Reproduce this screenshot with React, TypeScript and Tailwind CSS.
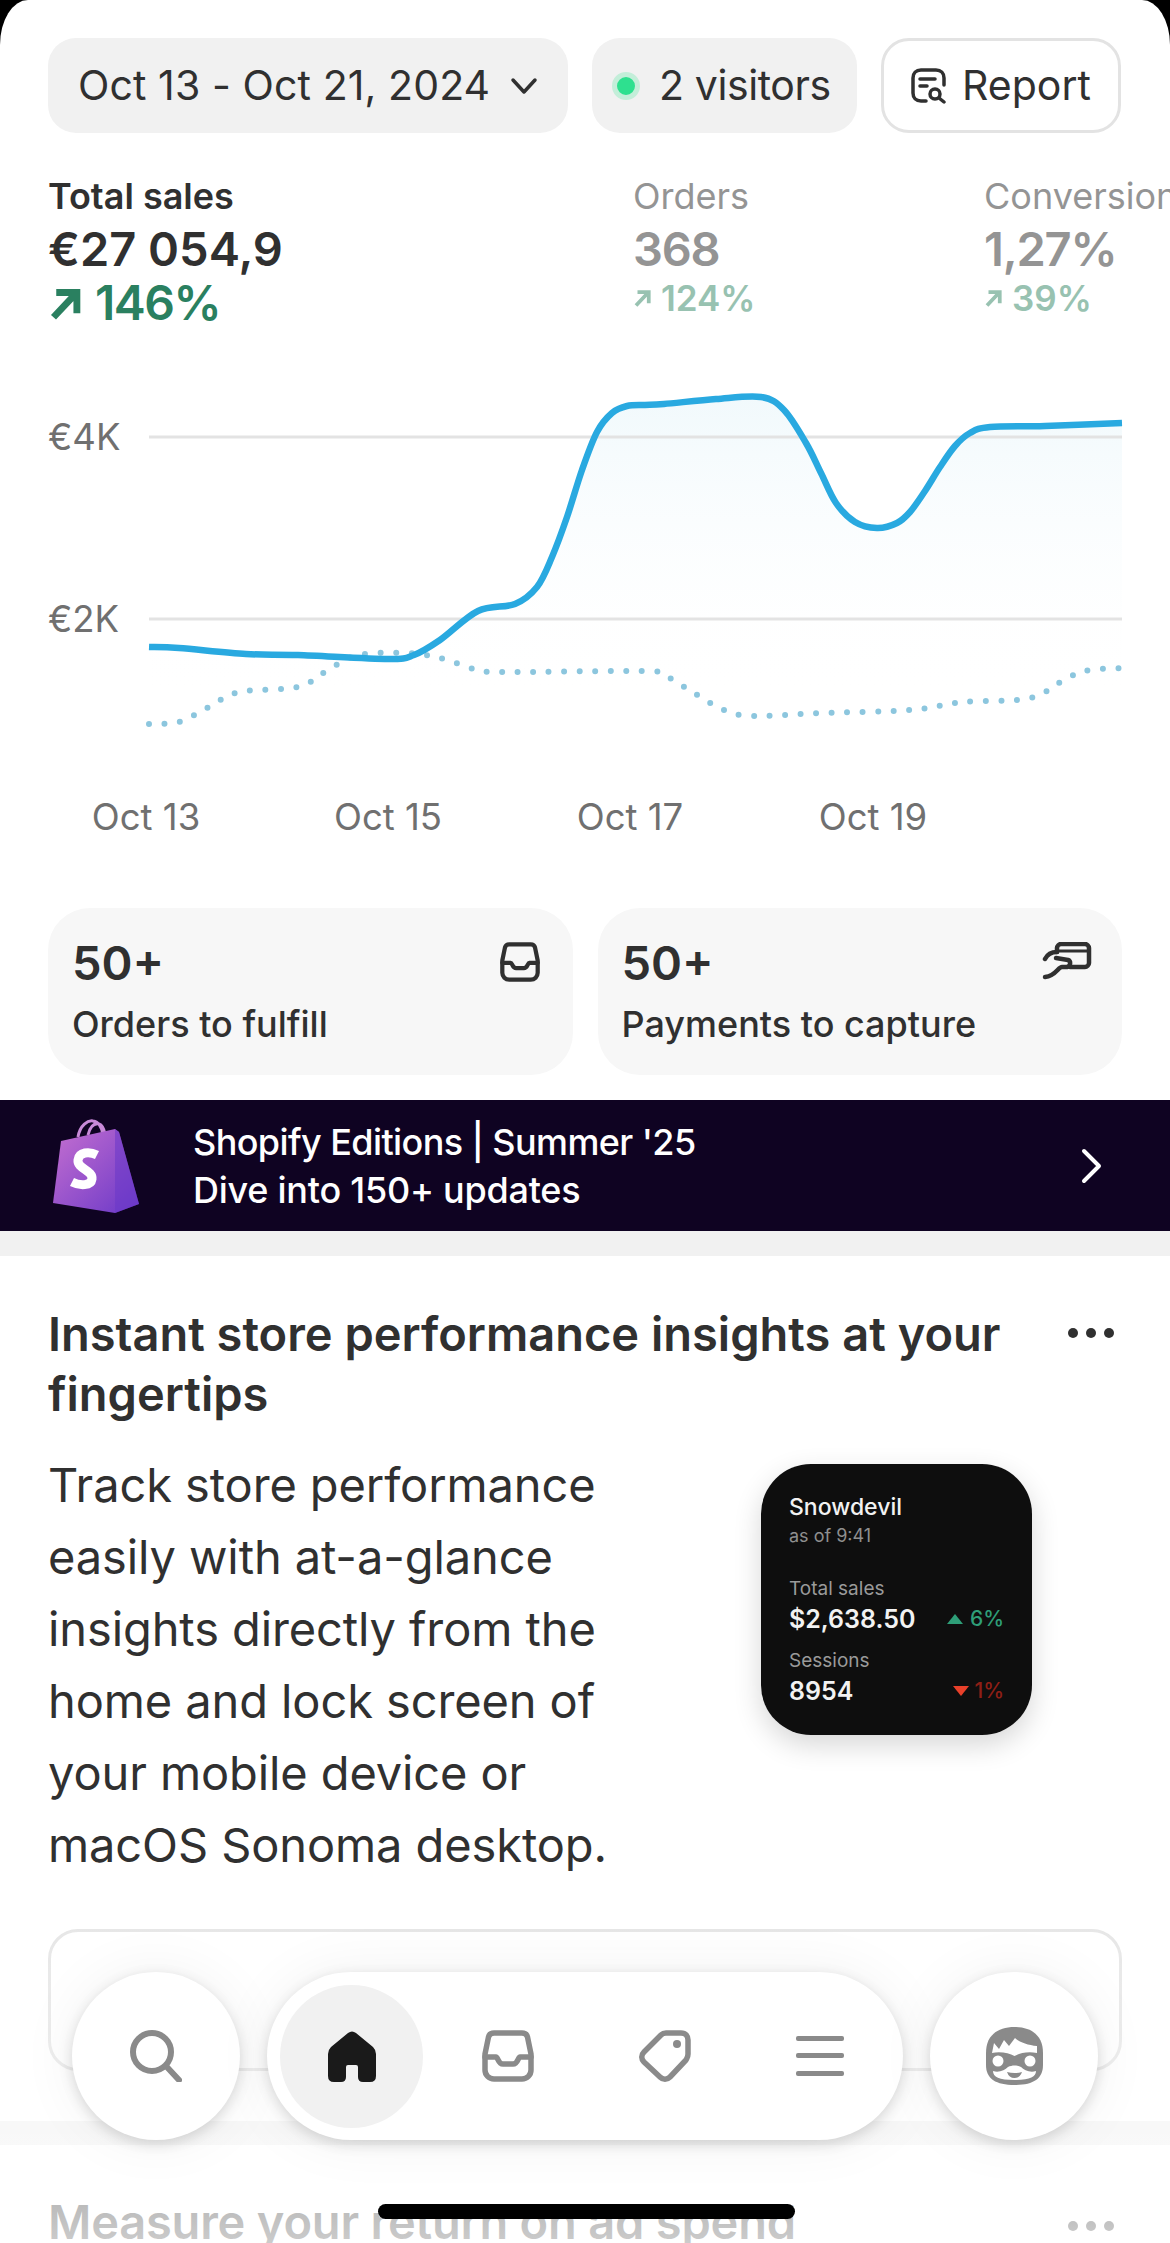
const inter = { fontFamily: '"Inter", "Liberation Sans", sans-serif' };

type Pt = [number, number];

const smooth = (pts: Pt[]) => {
  let d = `M${pts[0][0]} ${pts[0][1]}`;
  for (let i = 0; i < pts.length - 1; i++) {
    const p0 = pts[i - 1] || pts[i];
    const p1 = pts[i];
    const p2 = pts[i + 1];
    const p3 = pts[i + 2] || p2;
    const c1x = p1[0] + (p2[0] - p0[0]) / 6;
    const c1y = p1[1] + (p2[1] - p0[1]) / 6;
    const c2x = p2[0] - (p3[0] - p1[0]) / 6;
    const c2y = p2[1] - (p3[1] - p1[1]) / 6;
    d += ` C${c1x.toFixed(1)} ${c1y.toFixed(1)} ${c2x.toFixed(1)} ${c2y.toFixed(1)} ${p2[0]} ${p2[1]}`;
  }
  return d;
};

const sales: Pt[] = [
  [149, 287], [179, 288], [246, 294], [298, 295], [388, 299], [414, 295], [440, 280], [478, 251], [515, 244],
  [537, 227], [552, 197], [567, 157], [582, 110], [597, 72], [612, 53], [627, 46], [645, 45], [664, 44], [716, 39],
  [761, 37], [784, 50], [806, 83], [821, 113], [836, 143], [855, 162], [877, 168], [897, 163], [910, 152], [925, 131],
  [940, 107], [955, 86], [970, 73], [990, 67], [1045, 66], [1122, 63],
];
const previous: Pt[] = [
  [149, 364], [179, 362], [209, 347], [239, 332], [298, 327], [328, 310], [358, 295], [407, 293], [440, 298],
  [478, 310], [507, 312], [642, 311], [664, 315], [694, 333], [724, 350], [754, 356], [821, 353], [910, 350],
  [963, 342], [1030, 338], [1067, 318], [1090, 310], [1122, 308],
];

const SalesChart = () => (
  <svg width="1170" height="500" viewBox="0 0 1170 500" className="block">
    <defs>
      <linearGradient id="area" x1="0" y1="0" x2="0" y2="1">
        <stop offset="0" stopColor="#f1f9fc" />
        <stop offset="1" stopColor="#ffffff" stopOpacity="0" />
      </linearGradient>
    </defs>
    <path d={`${smooth(sales)} L1122 340 L149 340 Z`} fill="url(#area)" />
    <line x1="149" x2="1122" y1="77" y2="77" stroke="#e3e3e3" strokeWidth="3" />
    <line x1="149" x2="1122" y1="259" y2="259" stroke="#e3e3e3" strokeWidth="3" />
    <path d={smooth(previous)} fill="none" stroke="#8cc6de" strokeWidth="6" strokeDasharray="0 15.5" strokeLinecap="round" />
    <path d={smooth(sales)} fill="none" stroke="#29a9e0" strokeWidth="6.500" />
    <g fill="#707070" fontSize="36.500" style={inter}>
      <text x="48" y="90">€4K</text>
      <text x="48" y="272">€2K</text>
      <text x="146" y="470" textAnchor="middle">Oct 13</text>
      <text x="388" y="470" textAnchor="middle">Oct 15</text>
      <text x="630" y="470" textAnchor="middle">Oct 17</text>
      <text x="873" y="470" textAnchor="middle">Oct 19</text>
    </g>
  </svg>
);

const TrendArrow = ({ size, color }: { size: number; color: string }) => (
  <svg width={size} height={size} viewBox="0 0 24 24" fill="none" stroke={color} strokeWidth="5">
    <path d="M4 22 20 5M6 4h15v15" />
  </svg>
);

const InboxIcon = ({ size, color }: { size: number; color: string }) => (
  <svg width={size} height={size} viewBox="0 0 52 52" fill="none" stroke={color} strokeWidth="5.500" strokeLinejoin="round" strokeLinecap="round">
    <path d="M12 3h28c3 0 5 2 5.500 4L49 24v16c0 5-4 9-9 9H12c-5 0-9-4-9-9V24L6.500 7C7 5 9 3 12 3Z" />
    <path d="M3 27h11c2 0 2 7 7 7h10c5 0 5-7 7-7h11" />
  </svg>
);

const CardHandIcon = () => (
  <svg width="50" height="38" viewBox="0 0 50 38" fill="none" stroke="#303030" strokeWidth="4.500" strokeLinecap="round" strokeLinejoin="round">
    <path d="M15 10V6c0-2 2-4 4-4h24c2 0 4 2 4 4v15c0 2-2 4-4 4H28" />
    <path d="M15 9h32" strokeWidth="3" />
    <path d="M3 17c2-4 6-7 12-7" />
    <path d="m14 16 12 2c3 1 3 6-1 7h-5c-4 0-6 9-17 10" />
  </svg>
);

const ReportIcon = () => (
  <svg width="36" height="36" viewBox="0 0 36 36" fill="none" stroke="#303030" strokeWidth="3.500" strokeLinecap="round">
    <path d="M15 33H10c-5 0-8-3-8-8V10c0-5 3-8 8-8h15c5 0 8 3 8 8v7" />
    <path d="M9 11h15M9 18h7" />
    <circle cx="24" cy="26" r="5" />
    <path d="m28 30 5 4" />
  </svg>
);

const ShopifyBag = () => (
  <svg width="90" height="94" viewBox="0 0 90 94">
    <defs>
      <linearGradient id="bag" x1="0" y1="0" x2="1" y2="1">
        <stop offset="0" stopColor="#c56fd0" />
        <stop offset="1" stopColor="#6a38c8" />
      </linearGradient>
    </defs>
    <path d="M26 18C28 6 36 1 41 2c6 1 9 6 10 14M36 16C38 8 42 4 47 5c3 1 5 5 6 10" fill="none" stroke="#c88ad8" strokeWidth="3" />
    <path d="M9 22 63 10l4 3 20 72-24 9L1 84Z" fill="url(#bag)" />
    <path d="M63 10 67 13l20 72-24 9Z" fill="#6a38c8" fillOpacity=".55" />
    <path d="M45 36c-8-4-18-3-19 5-1 9 15 10 14 19-1 7-12 7-20 3" fill="none" stroke="#fff" strokeWidth="9" />
  </svg>
);

const Widget = () => (
  <div className="h-[271px] w-[271px] rounded-[50px] bg-[#0e0e0e] px-7 pt-[28px] shadow-[0_10px_28px_rgba(0,0,0,0.16)]">
    <div className="text-[23px] leading-[30px] font-medium text-[#f2f2f2]">Snowdevil</div>
    <div className="text-[18px] leading-[28px] text-[#8f8f8f]">as of 9:41</div>
    <div className="mt-[26px] text-[19px] leading-[26px] text-[#9a9a9a]">Total sales</div>
    <div className="flex items-center justify-between text-[25px] leading-[34px] font-semibold text-[#f2f2f2]">
      <span>$2,638.50</span>
      <span className="flex items-center gap-[7px] text-[21px] font-medium text-[#2e9e78]">
        <svg width="16" height="10" viewBox="0 0 16 10"><path d="M8 0 16 10H0Z" fill="#2e9e78" /></svg>
        6%
      </span>
    </div>
    <div className="mt-[12px] text-[19px] leading-[26px] text-[#9a9a9a]">Sessions</div>
    <div className="flex items-center justify-between text-[25px] leading-[34px] font-semibold text-[#f2f2f2]">
      <span>8954</span>
      <span className="flex items-center gap-[5px] text-[21px] font-medium text-[#8e1f16]">
        <svg width="16" height="10" viewBox="0 0 16 10"><path d="M0 0H16L8 10Z" fill="#e8402a" /></svg>
        1%
      </span>
    </div>
  </div>
);

const Dots = ({ color }: { color: string }) => (
  <svg width="48" height="12" viewBox="0 0 48 12" fill={color} className="mr-[7px]">
    <circle cx="6" cy="6" r="5" />
    <circle cx="24" cy="6" r="5" />
    <circle cx="42" cy="6" r="5" />
  </svg>
);

const navShadow = "shadow-[0_4px_14px_rgba(0,0,0,0.14),0_0_60px_rgba(0,0,0,0.06)]";

const BottomNav = () => (
  <div className="absolute inset-x-[72px] top-[1972px] flex justify-between gap-[27px]">
    <div className={`flex h-[168px] w-[168px] shrink-0 items-center justify-center rounded-full bg-white ${navShadow}`}>
      <svg width="52" height="52" viewBox="0 0 52 52" fill="none" stroke="#8a8a8a" strokeWidth="6" strokeLinecap="round">
        <circle cx="22" cy="22" r="19" />
        <path d="m36 36 13 14" />
      </svg>
    </div>
    <div className={`flex h-[168px] flex-1 items-center rounded-full bg-white pl-[13px] ${navShadow}`}>
      <div className="flex h-[143px] w-[143px] shrink-0 items-center justify-center rounded-full bg-[#f1f1f1]">
        <svg width="48" height="51" viewBox="0 0 48 51">
          <path d="M20 2Q24-1 28 2L45 16Q48 19 48 23V45Q48 51 42 51H35Q30 51 30 46V36Q30 34 28 34H20Q18 34 18 36V46Q18 51 13 51H6Q0 51 0 45V23Q0 19 3 16Z" fill="#1a1a1a" />
        </svg>
      </div>
      <div className="ml-[59px] flex items-center gap-[105px]">
        <InboxIcon size={52} color="#8a8a8a" />
        <svg width="52" height="52" viewBox="0 0 52 52" fill="none" stroke="#8a8a8a" strokeWidth="5.500" strokeLinejoin="round">
          <path d="M22 5c1-1 3-2 5-2h15c5 0 7 3 7 7v14c0 3-1 4-2 6L31 47c-3 3-7 3-10 0L5 32c-3-3-3-7 0-10Z" />
          <circle cx="38" cy="14" r="4" fill="#8a8a8a" stroke="none" />
        </svg>
        <svg width="48" height="40" viewBox="0 0 48 40" fill="#8a8a8a">
          <rect y="0" width="48" height="5" rx="2" />
          <rect y="17" width="48" height="5" rx="2" />
          <rect y="35" width="48" height="5" rx="2" />
        </svg>
      </div>
    </div>
    <div className={`flex h-[168px] w-[168px] shrink-0 items-center justify-center rounded-full bg-white ${navShadow}`}>
      <svg width="57" height="58" viewBox="0 0 57 58">
        <path d="M0 26C0 8 12 0 28.500 0S57 8 57 26v12c0 14-10 20-28.500 20S0 52 0 38Z" fill="#8a8a8a" />
        <path d="M6 26 8 16l5 6 5-9 5 6 6-8c4 4 13 7 22 8v7c-9-2-17 0-22.500 3C23 26 14 24 6 26Z" fill="#fff" />
        <circle cx="12" cy="34" r="5.500" fill="#fff" />
        <circle cx="44" cy="34" r="5.500" fill="#fff" />
        <path d="M7 44c6 2 12-1 15-4 4-2 9-2 13 0 3 3 9 6 15 4 0 6-6 9-21.500 9S7 50 7 44Z" fill="#fff" />
        <path d="M21 45Q28.500 47 36 45 34 51 28.500 51 23 51 21 45Z" fill="#8a8a8a" />
      </svg>
    </div>
  </div>
);

const Metric = ({ label, value, delta, className }: { label: string; value: string; delta: string; className: string }) => (
  <div className={`shrink-0 ${className}`}>
    <div className="text-[36px] leading-[44px] text-[#949494]">{label}</div>
    <div className="mt-[3px] text-[47px] leading-[56px] font-semibold tracking-[-1.2px] text-[#949494]">{value}</div>
    <div className="flex items-center gap-[10px] text-[35px] leading-[42px] font-semibold text-[#98c2b1]">
      <TrendArrow size={18} color="#98c2b1" />
      {delta}
    </div>
  </div>
);

const StatCard = ({ title, text, icon }: { title: string; text: string; icon: React.ReactNode }) => (
  <div className="flex h-[167px] flex-1 justify-between rounded-[42px] bg-[#f7f7f7] pl-6 pr-[30px] pt-[27px]">
    <div>
      <div className="text-[47px] leading-[56px] font-semibold text-[#303030]">{title}</div>
      <div className="mt-[11px] text-[36px] leading-[44px] font-medium text-[#303030]">{text}</div>
    </div>
    <div className="pt-[7px]">{icon}</div>
  </div>
);

const App = () => {
  return (
    <div className="relative h-[2243px] w-[1170px] overflow-hidden bg-black text-[#303030]" style={inter}>
      <div className="h-full overflow-hidden rounded-tl-[28px_45px] rounded-tr-[28px_45px] bg-white">
        {/* filters */}
        <div className="flex gap-6 px-12 pt-[38px]">
          <div className="flex h-[95px] w-[520px] items-center justify-between rounded-[28px] bg-[#f1f1f1] px-[30px] text-[41px] tracking-[0.1px]">
            Oct 13 - Oct 21, 2024
            <svg width="28" height="18" viewBox="0 0 28 18" fill="none" stroke="#303030" strokeWidth="3.500" strokeLinecap="round" strokeLinejoin="round">
              <path d="m3 3 11 12L25 3" />
            </svg>
          </div>
          <div className="flex h-[95px] w-[265px] items-center gap-[19px] rounded-[28px] bg-[#f1f1f1] pl-[20px] text-[41px] tracking-[-0.4px]">
            <span className="h-[28px] w-[28px] rounded-full border-[5px] border-[#c3eed9] bg-[#2ee08f]" />
            2 visitors
          </div>
          <div className="flex h-[95px] w-[240px] items-center justify-center gap-[15px] rounded-[28px] border-[3px] border-[#e3e3e3] bg-white text-[41px]">
            <ReportIcon />
            Report
          </div>
        </div>

        {/* metrics */}
        <div className="mt-[41px] flex pl-12">
          <div className="w-[585px] shrink-0">
            <div className="text-[36px] leading-[44px] font-semibold">Total sales</div>
            <div className="mt-[3px] text-[47px] leading-[56px] font-semibold">€27 054,9</div>
            <div className="flex items-center gap-[14px] text-[48px] leading-[52px] font-semibold tracking-[-1.5px] text-[#2a8060]">
              <TrendArrow size={33} color="#2a8060" />
              146%
            </div>
          </div>
          <Metric label="Orders" value="368" delta="124%" className="w-[351px]" />
          <Metric label="Conversion" value="1,27%" delta="39%" className="w-[240px]" />
        </div>

        <div className="mt-[31px]">
          <SalesChart />
        </div>

        {/* to do cards */}
        <div className="mt-[48px] flex gap-[25px] px-12">
          <StatCard title="50+" text="Orders to fulfill" icon={<div className="mr-[3px]"><InboxIcon size={40} color="#303030" /></div>} />
          <StatCard title="50+" text="Payments to capture" icon={<CardHandIcon />} />
        </div>

        {/* editions banner */}
        <div className="mt-[25px] flex h-[131px] items-center bg-[#0f0322] pl-[52px] pr-[67px] text-white">
          <ShopifyBag />
          <div className="ml-[51px] flex-1 text-[36px] leading-[48px] font-medium">
            <div className="tracking-[-0.6px]">Shopify Editions | Summer '25</div>
            <div className="tracking-[-0.25px]">Dive into 150+ updates</div>
          </div>
          <svg width="22" height="36" viewBox="0 0 22 36" fill="none" stroke="#fff" strokeWidth="4" strokeLinecap="round" strokeLinejoin="round">
            <path d="m3 3 15 15L3 33" />
          </svg>
        </div>
        <div className="h-[25px] bg-[#f1f1f1]" />

        {/* insights card */}
        <div className="px-12 pt-[48px]">
          <div className="flex items-start justify-between">
            <h2 className="w-[980px] text-[47px] leading-[60px] font-semibold">
              Instant store performance insights at your fingertips
            </h2>
            <div className="pt-[23px]">
              <Dots color="#303030" />
            </div>
          </div>
          <div className="mt-[25px] flex">
            <div className="w-[600px] text-[47px] leading-[72px] tracking-[-0.1px]">
              Track store performance easily with at-a-glance insights directly from the home and lock screen of your mobile device or macOS Sonoma desktop.
            </div>
            <div className="ml-[113px] pt-[15px]">
              <Widget />
            </div>
          </div>
          <div className="mt-[48px] h-[142px] rounded-[30px] border-[3px] border-[#e3e3e3]" />
        </div>
        <div className="mt-[50px] h-[24px] bg-[#f1f1f1]" />
        <div className="flex items-start justify-between px-12 pt-[47px]">
          <h2 className="text-[47px] leading-[60px] font-semibold tracking-[-0.2px]">Measure your return on ad spend</h2>
          <div className="pt-[28px]">
            <Dots color="#303030" />
          </div>
        </div>
      </div>

      {/* fade behind the floating bar */}
      <div className="absolute inset-x-0 bottom-0 h-[380px] bg-gradient-to-b from-white/0 to-white/75" />
      <BottomNav />
      <div className="absolute left-[378px] top-[2204px] h-[15px] w-[417px] rounded-full bg-black" />
    </div>
  );
};

export default App;
